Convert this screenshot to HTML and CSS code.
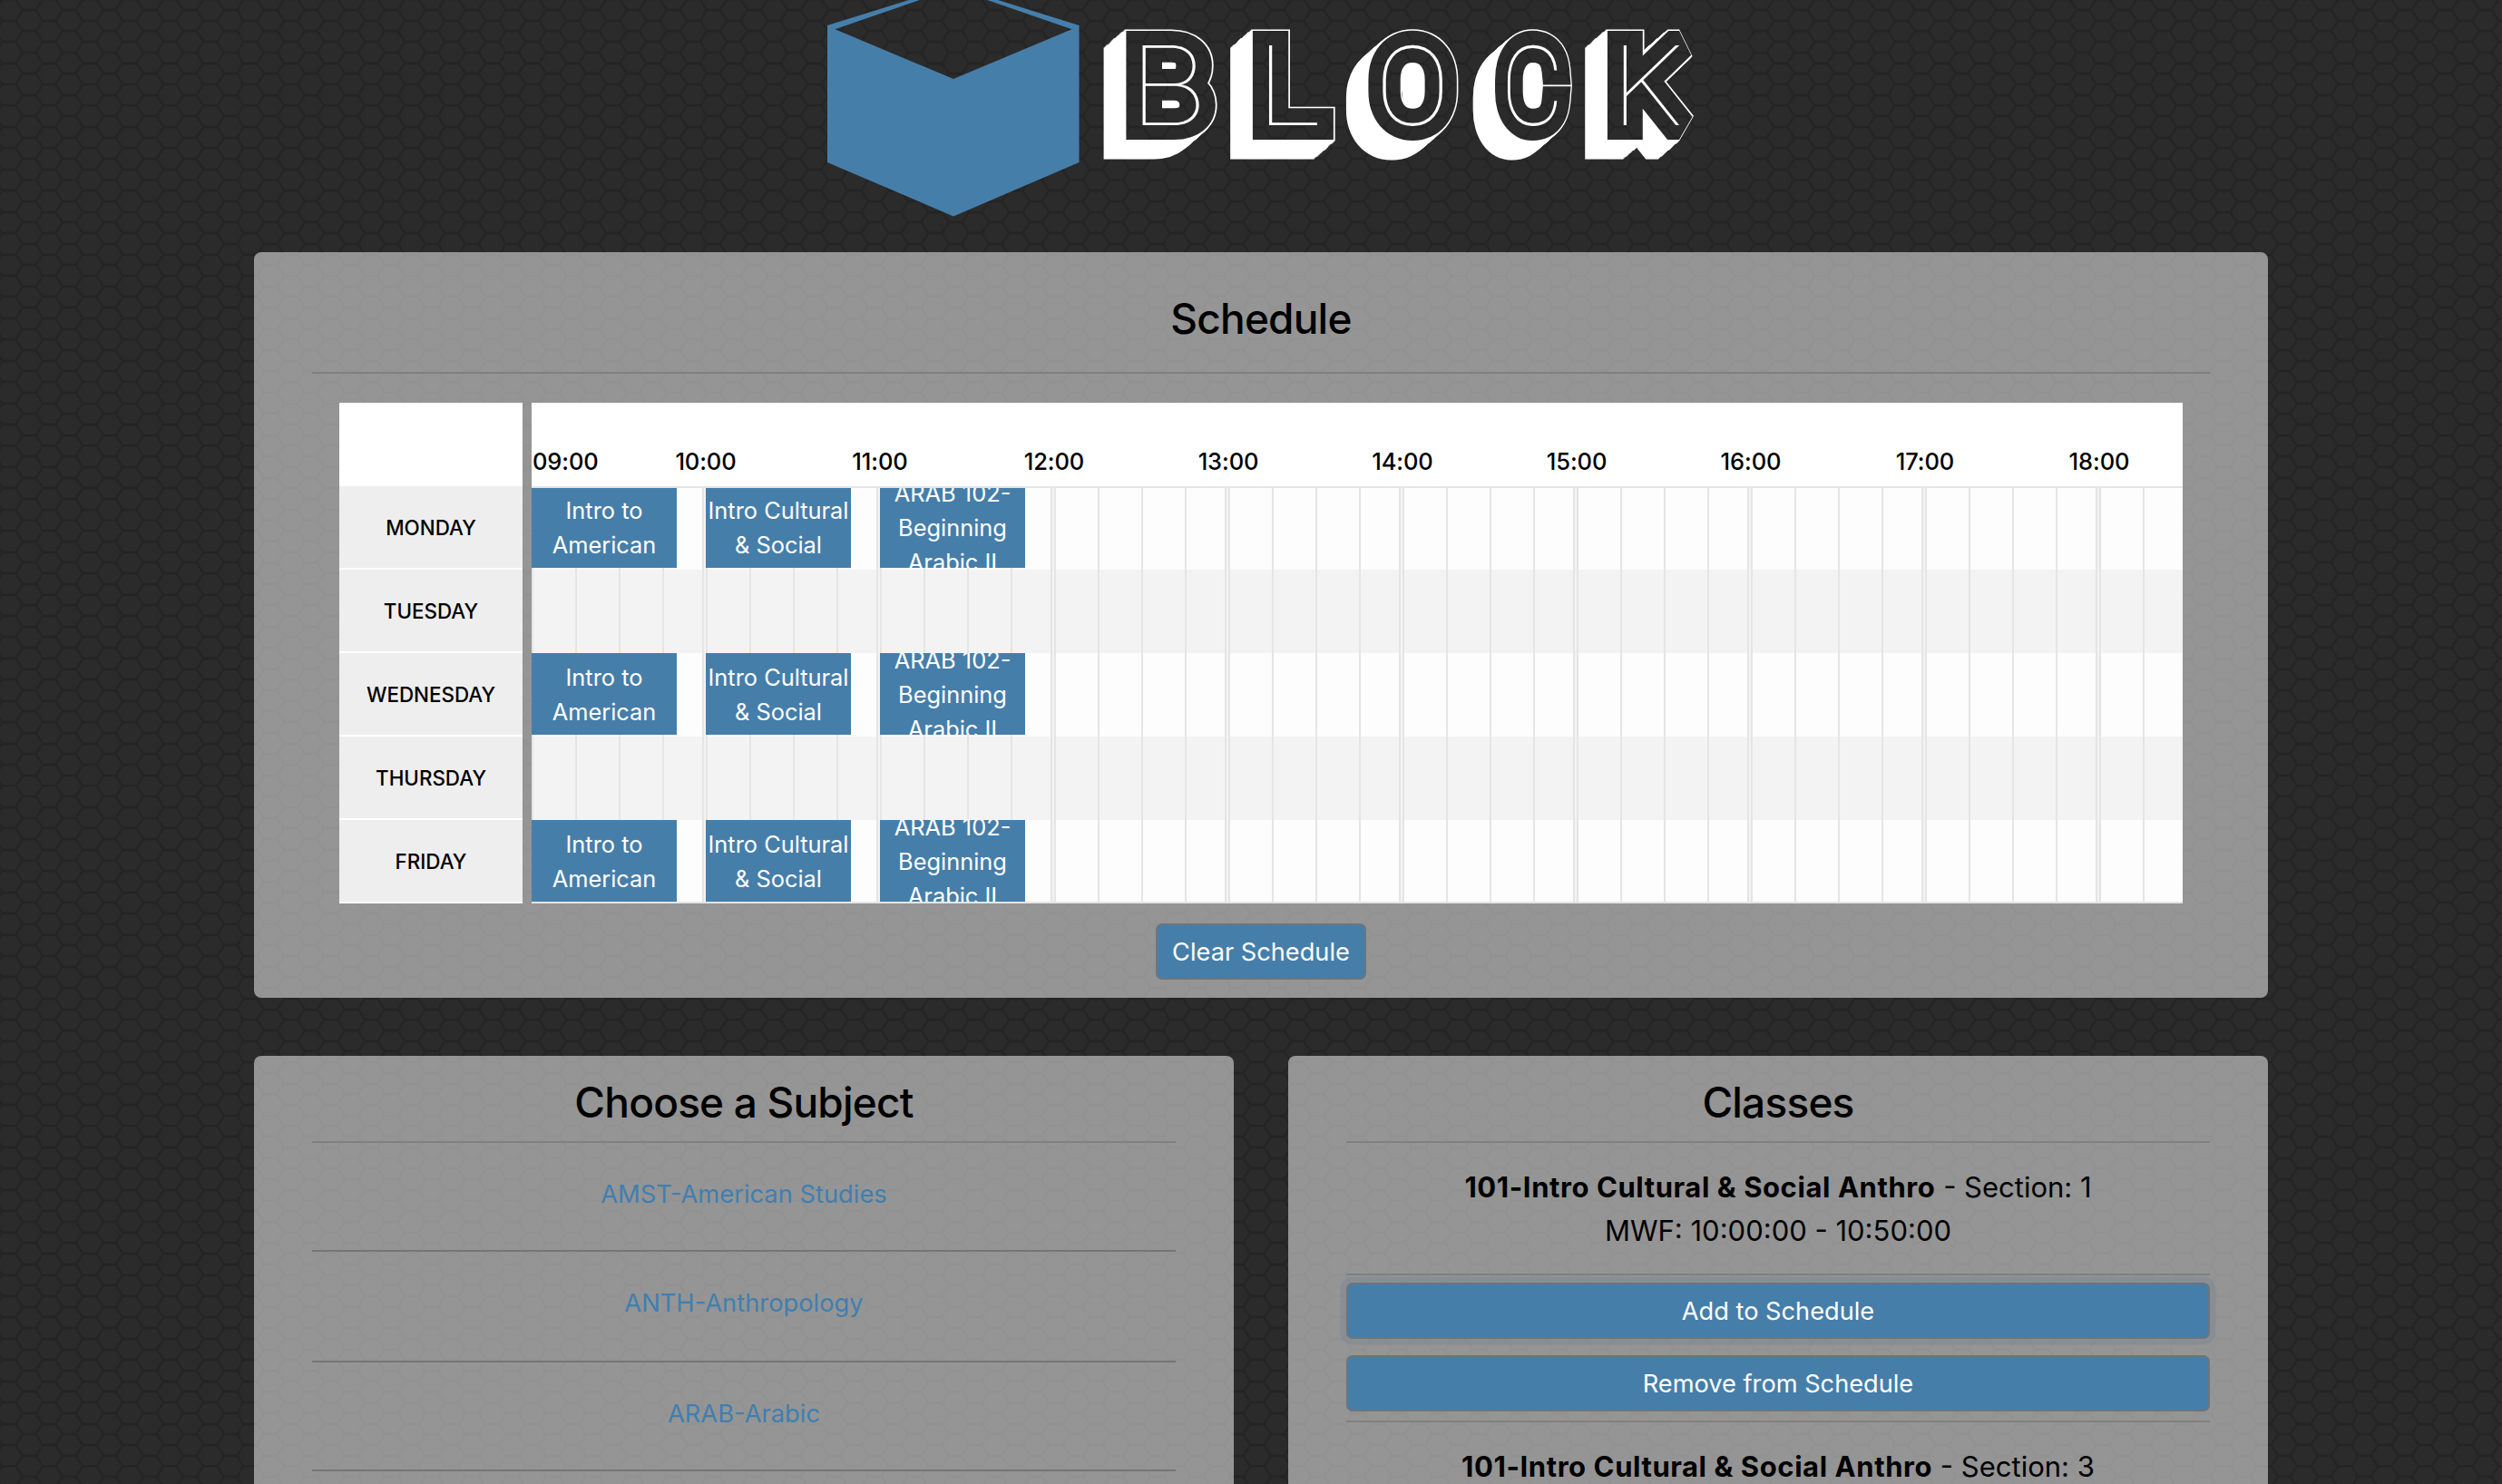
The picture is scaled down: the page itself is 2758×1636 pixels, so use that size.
FILE: index.html
```html
<!DOCTYPE html>
<html lang="en">
<head>
<meta charset="utf-8">
<title>Block</title>
<link rel="stylesheet" href="styles.css">
</head>
<body>
<header class="brand">
  <svg class="logo" width="960" height="240" viewBox="912 0 960 240" role="img" aria-label="Block">
    <defs>
      <g id="word">
        <text transform="translate(1288 138) scale(1.14 1)">B</text>
        <text transform="translate(1422 138) scale(1.13 1)">L</text>
        <text class="round" transform="translate(1557 138) scale(1 1)">O</text>
        <text class="round" transform="translate(1689 138) scale(.87 1)">C</text>
        <text transform="translate(1815 138) scale(1.12 1)">K</text>
      </g>
      <g id="x1"><use href="#word"/><use href="#word" x="-1" y=".87"/></g>
      <g id="x2"><use href="#x1"/><use href="#x1" x="-2" y="1.74"/></g>
      <g id="x3"><use href="#x2"/><use href="#x2" x="-4" y="3.48"/></g>
      <g id="x4"><use href="#x3"/><use href="#x3" x="-8" y="6.96"/></g>
      <mask id="face" maskUnits="userSpaceOnUse" x="1180" y="0" width="720" height="240">
        <rect x="1180" y="0" width="720" height="240" fill="#fff"/>
        <use href="#word" class="cut"/>
      </mask>
    </defs>
    <path class="cube" fill-rule="evenodd" d="M912 28 1051 -15.300 1189.500 28V179L1051 238.500 912 179ZM920.500 32.300 1051 87 1181.500 32.300 1051 -12.900Z"/>
    <g mask="url(#face)" class="solid"><use href="#x4"/><use href="#x4" x="-8" y="6.96"/></g>
    <use href="#word" class="line"/>
  </svg>
</header>
<main class="page">
  <section class="panel schedule">
    <h2>Schedule</h2>
    <hr>
    <div class="timetable">
      <ul class="days"><li>Monday</li><li>Tuesday</li><li>Wednesday</li><li>Thursday</li><li>Friday</li></ul>
      <div class="grid">
        <div class="hours"><span>09:00</span><span>10:00</span><span>11:00</span><span>12:00</span><span>13:00</span><span>14:00</span><span>15:00</span><span>16:00</span><span>17:00</span><span>18:00</span></div>
        <div class="rows">
          <div class="row"><span class="slot">Intro to American</span><span class="slot">Intro Cultural &amp; Social</span><span class="slot">ARAB 102-Beginning Arabic II</span></div>
          <div class="row"></div>
          <div class="row"><span class="slot">Intro to American</span><span class="slot">Intro Cultural &amp; Social</span><span class="slot">ARAB 102-Beginning Arabic II</span></div>
          <div class="row"></div>
          <div class="row"><span class="slot">Intro to American</span><span class="slot">Intro Cultural &amp; Social</span><span class="slot">ARAB 102-Beginning Arabic II</span></div>
        </div>
      </div>
    </div>
    <button class="btn clear">Clear Schedule</button>
  </section>
  <div class="columns">
    <section class="panel">
      <h2>Choose a Subject</h2>
      <hr>
      <ul class="subjects">
        <li><a>AMST-American Studies</a></li>
        <li><a>ANTH-Anthropology</a></li>
        <li><a>ARAB-Arabic</a></li>
      </ul>
    </section>
    <section class="panel">
      <h2>Classes</h2>
      <hr>
      <article class="course">
        <p><b>101-Intro Cultural &amp; Social Anthro</b> - Section: 1</p>
        <p class="when">MWF: 10:00:00 - 10:50:00</p>
        <hr>
        <button class="btn wide focus">Add to Schedule</button>
        <button class="btn wide">Remove from Schedule</button>
      </article>
      <hr>
      <article class="course">
        <p><b>101-Intro Cultural &amp; Social Anthro</b> - Section: 3</p>
      </article>
    </section>
  </div>
</main>
</body>
</html>
```
FILE: styles.css
```css
* { box-sizing: border-box; }

html { height: 100%; overflow: hidden; }

body {
  margin: 0;
  height: 100%;
  overflow: hidden;
  padding-left: 280px;
  font-family: Inter, "Liberation Sans", sans-serif;
  font-size: 28px;
  color: #000;
  background: #2b2b2b url("data:image/svg+xml,%3Csvg xmlns='http://www.w3.org/2000/svg' width='44.4' height='23.45' viewBox='0 0 44.4 23.45'%3E%3Cg fill='none' stroke='%23202020' stroke-linecap='round'%3E%3Cpath stroke-width='4' stroke-opacity='.3' d='M-5 11.7H7L15 0H29L37 11.700H49M7 11.700 15 23.450H29L37 11.700'/%3E%3Cpath stroke-width='1.800' stroke-opacity='.5' d='M-5 11.700H7L15 0H29L37 11.700H49M7 11.700 15 23.450H29L37 11.700'/%3E%3C/g%3E%3C/svg%3E") 10px 11px / 44.4px 23.45px;
}

h2, p, ul { margin: 0; padding: 0; }
ul { list-style: none; }

.brand { width: 2220px; height: 278px; display: flex; justify-content: center; align-items: flex-start; padding-left: 4px; }
.logo { display: block; }
.logo text { font: 100 121px Inter, sans-serif; text-anchor: middle; }
.logo .round { font: 100 122px Roboto, sans-serif; }
.cube { fill: #467eaa; }
.solid { fill: #fff; stroke: #fff; stroke-width: 35px; stroke-linejoin: miter; stroke-miterlimit: 1.5; }
.cut { fill: #000; stroke: #000; stroke-width: 32px; stroke-linejoin: miter; stroke-miterlimit: 1.5; }
.line { fill: #fff; }

.page { width: 2220px; display: flex; flex-direction: column; gap: 64px; }
.panel { background: rgba(255, 255, 255, .5); border-radius: 8px; padding: 0 64px; text-align: center; }
.panel h2 { font-size: 46px; font-weight: 520; line-height: 58px; letter-spacing: -.8px; padding: 22px 0 14px; }
hr { margin: 0; border: 0; height: 2px; background: #808080; }

.schedule { height: 822px; display: flex; flex-direction: column; }
.schedule h2 { padding: 44px 0 30px; }
.schedule hr { flex: none; }
.timetable { display: flex; gap: 10px; margin: 32px 30px 22px; height: 552px; }
.days { width: 202px; padding-top: 92px; background: #fff; }
.days li { height: 92px; border-bottom: 2px solid #fff; background: #eee; display: flex; align-items: center; justify-content: center; padding-top: 1px; font-size: 22.4px; font-weight: 500; text-transform: uppercase; }
.grid { width: 1820px; overflow: hidden; background: #fff; }
.hours { height: 94px; border-bottom: 2px solid #e5e5e5; display: flex; padding-top: 50px; font-size: 25.5px; font-weight: 550; line-height: 30px; letter-spacing: -.1px; }
.hours span { flex: none; width: 192px; text-align: center; }
.hours span:first-child { width: 96px; text-align: left; padding-left: 1px; }
.rows {
  position: relative;
  height: 458px;
  border-bottom: 2px solid #e5e5e5;
}
.rows::before {
  content: "";
  position: absolute;
  inset: 0;
  background:
    repeating-linear-gradient(90deg, #e5e5e5 0 2px, transparent 2px 48px),
    repeating-linear-gradient(90deg, transparent 0 188px, #e5e5e5 188px 190px, #f3f3f3 190px 192px);
}
.row { height: 92px; display: flex; gap: 32px; background: #f3f3f3; }
.row:nth-child(odd) { background: #fdfdfd; }
.row:first-child, .row:last-child { height: 90px; }
.slot { position: relative; flex: none; width: 160px; height: 90px; overflow: hidden; background: #467eaa; color: #fff; font-size: 25.4px; line-height: 38px; padding-top: 2px; display: flex; align-items: center; justify-content: center; }
.row:first-child .slot { height: 88px; padding-top: 0; }

.btn { font: 400 27.2px/38px Inter, "Liberation Sans", sans-serif; height: 62px; padding: 2px 0 0; color: #fff; background: #467eaa; border: 2px solid #6c757d; border-radius: 7px; }
.clear { align-self: center; width: 232px; white-space: nowrap; }

.columns { display: grid; grid-template-columns: 1fr 1fr; gap: 60px; height: 520px; }
.subjects li { height: 120px; padding-bottom: 5px; border-bottom: 2px solid #757575; display: flex; align-items: center; justify-content: center; }
.subjects li:nth-child(2) { height: 122px; padding-bottom: 8px; }
.subjects a { color: #407fb0; font-size: 27.3px; }

.course { font-size: 31px; line-height: 48px; padding-top: 25px; }
.course b { letter-spacing: .58px; }
.when { margin-bottom: 23px; }
.wide { display: block; width: 100%; margin: 8px 0 18px; }
.wide + .wide { margin: 0 0 10px; }
.focus { box-shadow: 0 0 0 6.4px rgba(108, 125, 150, .3); }
```
